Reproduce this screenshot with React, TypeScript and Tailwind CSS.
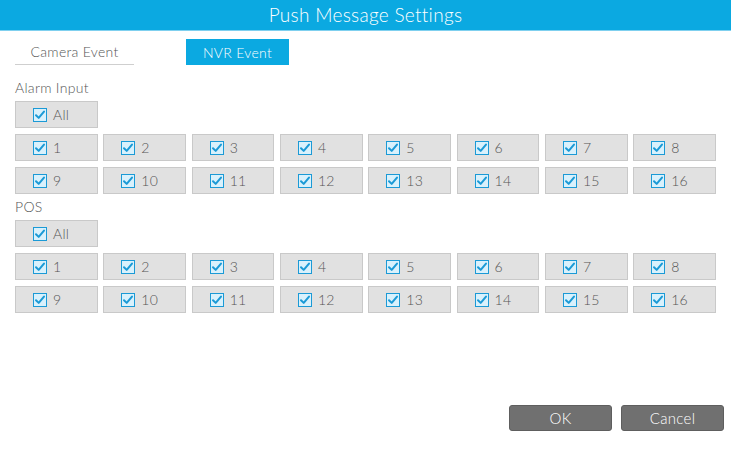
import React from 'react';

const font = { fontFamily: 'Lato, "Noto Sans", sans-serif' };

function Check() {
  return (
    <span className="w-[14px] h-[14px] border border-[#1b9ad6] bg-[#d9f1fc] flex items-center justify-center shrink-0">
      <svg width="12" height="12" viewBox="0 0 12 12" fill="none">
        <path d="M2 6.2 L4.7 8.9 L10 2.6" stroke="#1b9ad6" strokeWidth="2" strokeLinecap="round" strokeLinejoin="round" />
      </svg>
    </span>
  );
}

function Box({ label }: { label: string }) {
  return (
    <div className="h-[27px] bg-[#e1e1e1] border border-[#c9c9c9] flex items-center pl-[17px] gap-[6px] text-[14px] text-[#555] tracking-[0.3px]">
      <Check />
      <span>{label}</span>
    </div>
  );
}

function Group({ title, mt }: { title: string; mt: string }) {
  const nums = Array.from({ length: 16 }, (_, i) => String(i + 1));
  return (
    <div className={`${mt} px-[15px]`}>
      <div className="h-[16px] leading-[16px] text-[14px] text-[#555] tracking-[0.3px] mb-[5px]">{title}</div>
      <div className="grid grid-cols-8 gap-x-[5.5px] gap-y-[6px]">
        <Box label="All" />
        <div className="col-span-7" />
        {nums.map((n) => (
          <Box key={n} label={n} />
        ))}
      </div>
    </div>
  );
}

export default function App() {
  return (
    <div className="w-[731px] h-[449px] bg-white flex flex-col font-light" style={font}>
      <div className="h-[31px] bg-[#0ba9e1] border-b border-[#7fd0ef] flex items-center justify-center text-white text-[19px] tracking-[0.3px]">
        Push Message Settings
      </div>
      <div className="flex pt-[8px] pl-[15px] gap-[52px]">
        <div className="w-[119px] h-[26px] border-b border-[#cfcfcf] flex items-center justify-center text-[14px] tracking-[0.3px] text-[#555]">
          Camera Event
        </div>
        <div className="w-[103px] h-[26px] bg-[#0ba9e1] flex items-center justify-center text-[14px] tracking-[0.3px] text-white">
          NVR Event
        </div>
      </div>
      <Group title="Alarm Input" mt="mt-[15px]" />
      <Group title="POS" mt="mt-[5px]" />
      <div className="mt-auto flex justify-end gap-[9px] pr-[7px] pb-[18px]">
        <button className="w-[103px] h-[26px] rounded-[3px] bg-[#707070] border border-[#5e5e5e] text-white text-[15px] tracking-[0.3px]">OK</button>
        <button className="w-[103px] h-[26px] rounded-[3px] bg-[#707070] border border-[#5e5e5e] text-white text-[15px] tracking-[0.3px]">Cancel</button>
      </div>
    </div>
  );
}
